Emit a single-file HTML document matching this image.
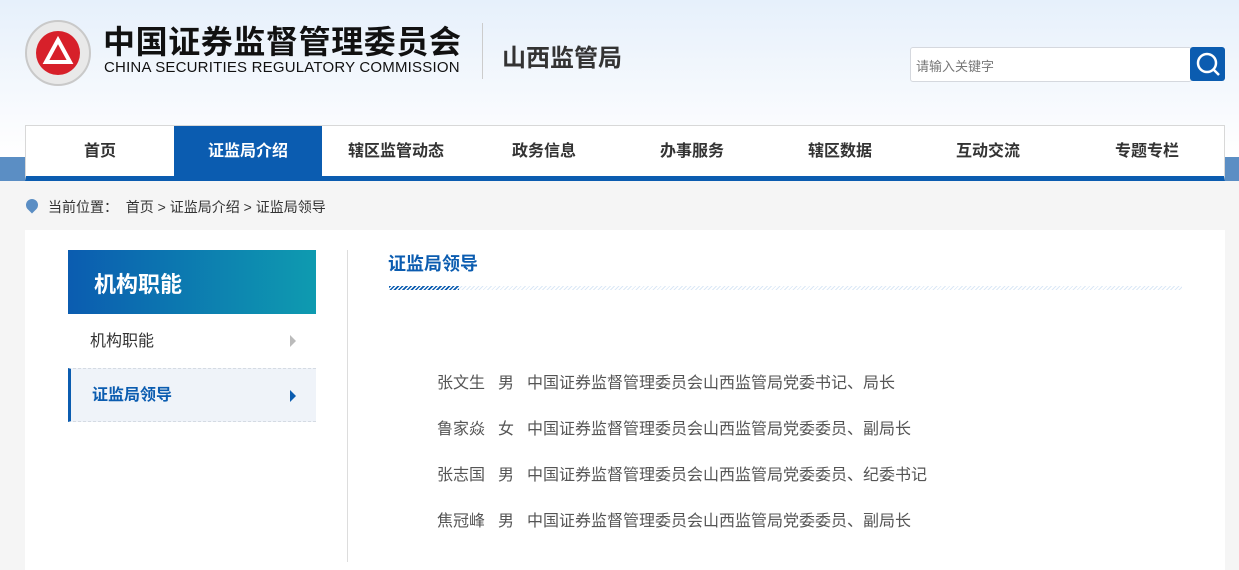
<!DOCTYPE html>
<html><head><meta charset="utf-8"><style>
*{margin:0;padding:0;box-sizing:border-box}
body{width:1239px;height:562px;overflow:hidden;background:#f5f5f5;font-family:"Liberation Sans","Noto Sans CJK SC",sans-serif;position:relative}
.top{position:absolute;left:0;top:0;width:1239px;height:157px;background:linear-gradient(#e6f0fb,#fbfcfe 130px,#fff)}
.band{position:absolute;left:0;top:157px;width:1239px;height:24px;background:#5b8ec4}
.logo{position:absolute;left:25px;top:20px;width:66px;height:66px;border-radius:50%;background:#e9e9e9;border:2px solid #c9c9c9}
.logo .in{position:absolute;left:9px;top:9px;width:44px;height:44px;border-radius:50%;background:#d7202a}
.t1{position:absolute;left:103px;top:22px;font-size:32px;line-height:40px;font-weight:bold;color:#111;letter-spacing:0.6px}
.t2{position:absolute;left:104px;top:59px;font-size:15px;line-height:18px;color:#111;letter-spacing:0.2px}
.sep{position:absolute;left:482px;top:23px;width:1px;height:56px;background:#ccc}
.t3{position:absolute;left:502px;top:38px;font-size:24px;font-weight:bold;color:#333}
.search{position:absolute;left:910px;top:47px;width:282px;height:35px;background:#fff;border:1px solid #d5d8de;border-radius:3px;font-size:13px;color:#777;padding:8px 5px}
.sbtn{position:absolute;left:1190px;top:47px;width:35px;height:34px;background:#0b5cb0;border-radius:3px}
.nav{position:absolute;left:25px;top:125px;width:1200px;height:56px;background:#fff;border:1px solid #d8d8d8;border-bottom:5px solid #0b5cb0;display:flex}
.nav div{height:50px;line-height:52px;text-align:center;font-size:16px;font-weight:bold;color:#333}
.nav .a{background:#0b5cb0;color:#fff}
.crumb{position:absolute;left:48px;top:197px;font-size:14px;color:#333;white-space:pre}
.pin{position:absolute;left:26px;top:199px;width:12px;height:12px;border-radius:50% 50% 50% 0;transform:rotate(-45deg);background:#5b8ec4}
.panel{position:absolute;left:25px;top:230px;width:1200px;height:340px;background:#fff}
.side{position:absolute;left:68px;top:250px;width:248px;height:64px;background:linear-gradient(90deg,#0b5cb0,#0e9bb0);color:#fff;font-size:22px;font-weight:bold;padding:17px 26px}
.it{position:absolute;left:68px;width:248px;height:54px;font-size:16px;padding:0 22px;line-height:56px;color:#333}
.arr{position:absolute;right:20px;top:21px;border-left:6px solid #bbb;border-top:6px solid transparent;border-bottom:6px solid transparent}
.vl{position:absolute;left:347px;top:250px;width:1px;height:312px;background:#ddd}
.h{position:absolute;left:388px;top:250px;font-size:18px;font-weight:bold;color:#0b5cb0}
.ul{position:absolute;left:389px;top:286px;width:793px;height:4px;background:repeating-linear-gradient(135deg,#dbe8f6 0 1px,#fff 1px 3px)}
.ul2{position:absolute;left:389px;top:286px;width:70px;height:4px;background:repeating-linear-gradient(135deg,#0b5cb0 0 1.5px,#fff 1.5px 3px)}
.p{position:absolute;left:437px;font-size:16px;color:#555;white-space:nowrap;height:22px}
.p span{position:absolute;top:0}
</style></head><body>
<div class="top"></div><div class="band"></div>
<div class="logo"><div class="in"><svg width="44" height="44" viewBox="0 0 44 44"><path d="M22 9 L34 31 H10 Z" fill="none" stroke="#fff" stroke-width="4"/><path d="M22 18 L28 28 H16Z" fill="#d7202a"/></svg></div></div>
<div class="t1">中国证券监督管理委员会</div>
<div class="t2">CHINA SECURITIES REGULATORY COMMISSION</div>
<div class="sep"></div>
<div class="t3">山西监管局</div>
<div class="search">请输入关键字</div>
<div class="sbtn"><svg width="35" height="34"><circle cx="17" cy="16" r="9" fill="none" stroke="#fff" stroke-width="2.5"/><line x1="24" y1="23" x2="29" y2="28" stroke="#fff" stroke-width="2.5"/></svg></div>
<div class="nav"><div style="width:148px">首页</div><div class="a" style="width:148px">证监局介绍</div><div style="width:148px">辖区监管动态</div><div style="width:148px">政务信息</div><div style="width:148px">办事服务</div><div style="width:148px">辖区数据</div><div style="width:148px">互动交流</div><div style="width:162px;padding-left:8px">专题专栏</div></div>
<div class="pin"></div>
<div class="crumb">当前位置：  首页 &gt; 证监局介绍 &gt; 证监局领导</div>
<div class="panel"></div>
<div class="side">机构职能</div>
<div class="it" style="top:314px">机构职能<span class="arr"></span></div>
<div class="it" style="top:368px;background:#eff3f9;border-top:1px dashed #d5dbe3;border-bottom:1px dashed #d5dbe3;border-left:3px solid #0b5cb0;color:#0b5cb0;font-weight:bold;padding-left:21px;line-height:54px">证监局领导<span class="arr" style="border-left-color:#0b5cb0"></span></div>
<div class="vl"></div>
<div class="h">证监局领导</div>
<div class="ul"></div><div class="ul2"></div>
<div class="p" style="top:369px"><span style="left:0">张文生</span><span style="left:61px">男</span><span style="left:90px">中国证券监督管理委员会山西监管局党委书记、局长</span></div>
<div class="p" style="top:415px"><span style="left:0">鲁家焱</span><span style="left:61px">女</span><span style="left:90px">中国证券监督管理委员会山西监管局党委委员、副局长</span></div>
<div class="p" style="top:461px"><span style="left:0">张志国</span><span style="left:61px">男</span><span style="left:90px">中国证券监督管理委员会山西监管局党委委员、纪委书记</span></div>
<div class="p" style="top:507px"><span style="left:0">焦冠峰</span><span style="left:61px">男</span><span style="left:90px">中国证券监督管理委员会山西监管局党委委员、副局长</span></div>
</body></html>
